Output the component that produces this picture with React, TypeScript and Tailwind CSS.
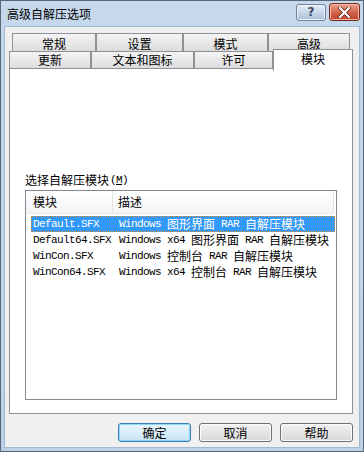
import React from "react";

const CJK = "font-['Noto_Sans_CJK_SC',sans-serif]";

function Mixed({ t }: { t: string }) {
  const parts = t.match(/[\x00-\x7f]+|[^\x00-\x7f]+/g) || [];
  return (
    <>
      {parts.map((p, i) =>
        /^[\x00-\x7f]/.test(p) ? (
          <span key={i} className="font-['Liberation_Mono',monospace] text-[11px] tracking-[-0.6px] whitespace-pre">
            {p}
          </span>
        ) : (
          <span key={i} className={`${CJK} text-[12px]`}>
            {p}
          </span>
        )
      )}
    </>
  );
}

const rows = [
  ["Default.SFX", "Windows 图形界面 RAR 自解压模块"],
  ["Default64.SFX", "Windows x64 图形界面 RAR 自解压模块"],
  ["WinCon.SFX", "Windows 控制台 RAR 自解压模块"],
  ["WinCon64.SFX", "Windows x64 控制台 RAR 自解压模块"],
];

function Tab({ label, w, low }: { label: string; w: string; low?: boolean }) {
  return (
    <div
      className={`${w} h-full border border-b-0 border-[#8e9096] bg-gradient-to-b from-[#f4f4f4] to-[#dcdcdc] flex ${
        low ? "items-end pb-[1px]" : "items-center"
      } justify-center text-[12px] leading-none text-black`}
    >
      {label}
    </div>
  );
}

function Btn({ label, def }: { label: string; def?: boolean }) {
  return (
    <div
      className={`w-[73px] h-[19px] rounded-[3px] flex items-center justify-center text-[12px] leading-none text-black ${
        def
          ? "border border-[#3c7fb1] bg-gradient-to-b from-[#eaf6fd] to-[#c8e3f5] shadow-[inset_0_0_0_1px_#8fd6f8]"
          : "border border-[#707070] bg-gradient-to-b from-[#f2f2f2] to-[#d8d8d8] shadow-[inset_0_0_0_1px_#fcfcfc]"
      }`}
    >
      {label}
    </div>
  );
}

export default function App() {
  return (
    <div className={`w-[364px] h-[452px] border border-[#59677a] bg-gradient-to-b from-[#c6d8ec] to-[#bcd0e8] flex flex-col ${CJK}`}>
      {/* title bar */}
      <div className="h-[25px] flex items-center pl-[6px] pr-[3px] shrink-0">
        <span className="text-[12px] leading-none text-black">高级自解压选项</span>
        <div className="flex-1" />
        <div className="w-[30px] h-[17px] mt-[-3px] rounded-[3px] border border-[#6e83a2] bg-gradient-to-b from-[#e4ecf6] via-[#c8d7ea] to-[#aabfd9] flex items-center justify-center shadow-[inset_0_0_0_1px_#eef3fa]">
          <span className="font-['DejaVu_Sans',sans-serif] font-bold text-[12px] leading-none text-[#3b4a60]">?</span>
        </div>
        <div className="w-[31px] h-[18px] mt-[-3px] ml-[3px] rounded-[3px] border border-[#7a2a1c] bg-gradient-to-b from-[#e9a492] via-[#d4654c] to-[#c2412a] flex items-center justify-center shadow-[inset_0_0_0_1px_#f0b9a9]">
          <svg width="13" height="11" viewBox="0 0 13 11">
            <path d="M2 1 L11 10 M11 1 L2 10" stroke="#5a1c10" strokeWidth="3.6" strokeLinecap="square" />
            <path d="M2 1 L11 10 M11 1 L2 10" stroke="#ffffff" strokeWidth="2.2" strokeLinecap="square" />
          </svg>
        </div>
      </div>

      {/* body */}
      <div className="flex-1 mx-[3px] mb-[3px] border border-[#a4b9d2] bg-[#f0f0f0] flex flex-col pl-[4px] pr-[6px] pt-[6px] pb-[4px]">
        {/* tabs */}
        <div className="relative h-[35px] shrink-0 flex flex-col">
          <div className="h-[18px] flex pl-[3px]">
            <Tab label="常规" w="w-[84px]" low />
            <Tab label="设置" w="w-[87px]" low />
            <Tab label="模式" w="w-[85px]" low />
            <Tab label="高级" w="w-[82px]" low />
          </div>
          <div className="h-[17px] flex">
            <Tab label="更新" w="w-[82px]" />
            <Tab label="文本和图标" w="w-[103px]" />
            <Tab label="许可" w="w-[79px]" />
          </div>
          <div className="absolute left-[264px] top-[16px] w-[80px] h-[22px] z-10 bg-white border border-b-0 border-[#8e9096] flex justify-center pt-[2px] text-[12px] leading-[14px] text-black">
            模块
          </div>
        </div>

        {/* panel */}
        <div className="h-[346px] shrink-0 border border-[#8e9096] bg-white pl-[15px] pt-[104px] flex flex-col">
          <div className="h-[14px] flex items-center text-[12px] leading-none text-black">
            <span>选择自解压模块</span>
            <span className="font-['Liberation_Mono',monospace] text-[11px] tracking-[-0.6px] ml-[1px]">
              (<span className="underline">M</span>)
            </span>
          </div>
          <div className="mt-[3px] w-[312px] h-[210px] border border-[#828790] bg-white flex flex-col">
            <div className="h-[23px] flex shrink-0 bg-gradient-to-b from-[#ffffff] to-[#f3f4f6] border-b border-[#e5e6e8] w-[308px]">
              <div className="w-[87px] h-full flex items-center pl-[7px] border-r border-[#e3e4e6] text-[12px] leading-none text-black">
                模块
              </div>
              <div className="flex-1 h-full flex items-center pl-[5px] border-r border-[#e3e4e6] text-[12px] leading-none text-black">
                描述
              </div>
            </div>
            <div className="mt-[2px] pl-[5px] flex flex-col">
              {rows.map((r, i) => (
                <div
                  key={i}
                  className={`w-[304px] h-[16px] flex items-center leading-none ${
                    i === 0
                      ? "bg-[#3399ff] text-white outline-1 outline-dotted outline-[#d88a3a] -outline-offset-1"
                      : "text-black"
                  }`}
                >
                  <div className="w-[88px] pl-[2px] shrink-0 flex items-center">
                    <Mixed t={r[0]} />
                  </div>
                  <div className="flex items-center whitespace-pre">
                    <Mixed t={r[1]} />
                  </div>
                </div>
              ))}
            </div>
          </div>
        </div>

        {/* buttons */}
        <div className="mt-[9px] h-[19px] flex justify-end gap-[8px]">
          <Btn label="确定" def />
          <Btn label="取消" />
          <Btn label="帮助" />
        </div>
      </div>
    </div>
  );
}
